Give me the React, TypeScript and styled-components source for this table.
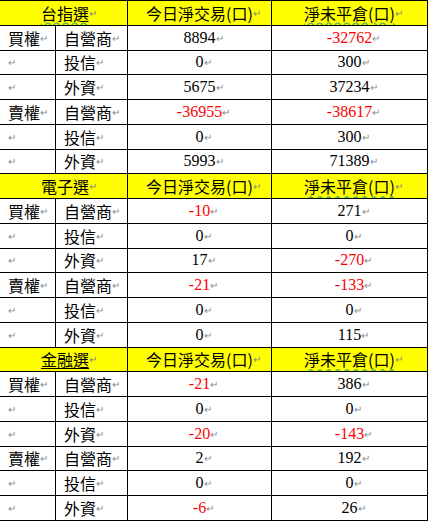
import { Fragment } from "react"
import styled, { createGlobalStyle } from "styled-components"

const Global = createGlobalStyle`
    html, body {
        margin: 0;
        padding: 0;
        background: #ffffff;
    }
`

// black background shows through the 1px gaps as the ruling
const Sheet = styled.div`
    width: 428px;
    box-sizing: border-box;
    padding: 1px 1px 1px 0;
    background: #000;
    display: grid;
    grid-template-columns: 55px 71px 143px 155px;
    grid-auto-rows: 23.76px;
    gap: 1px;
    font-family: "Noto Sans CJK TC", "Noto Sans CJK SC", sans-serif;
    font-size: 16px;
    color: #000;
`

const Cell = styled.div<{ $head?: boolean; $span?: number; $pad?: number }>`
    grid-column: span ${p => p.$span ?? 1};
    background: ${p => (p.$head ? "#ffff00" : "#ffffff")};
    display: flex;
    align-items: center;
    justify-content: ${p => (p.$pad !== undefined ? "flex-start" : "center")};
    padding-left: ${p => p.$pad ?? 0}px;
    white-space: nowrap;
    overflow: hidden;
    line-height: 20px;
`

const Num = styled.span<{ $neg?: boolean }>`
    font-family: "Liberation Serif", "Times New Roman", serif;
    font-size: 16px;
    color: ${p => (p.$neg ? "#ff0000" : "#000")};
`

// Word paragraph mark, no width so the text stays centred
const Mark = styled.span`
    display: inline-block;
    width: 0;
    overflow: visible;
    color: #8a8a8a;
    font-size: 10px;
    &::before {
        content: "↵";
    }
`

const Heading = styled.span<{ $deco?: "wavy" | "under" | "none" }>`
    text-decoration: ${p =>
        p.$deco === "wavy" ? "underline wavy #5cb85c" : p.$deco === "under" ? "underline #000" : "none"};
    text-underline-offset: 2px;
`

type Row = { side?: string; who: string; day: number; oi: number }

type Section = { title: string; deco: "wavy" | "under" | "none"; rows: Row[] }

const sections: Section[] = [
    {
        title: "台指選",
        deco: "wavy",
        rows: [
            { side: "買權", who: "自營商", day: 8894, oi: -32762 },
            { who: "投信", day: 0, oi: 300 },
            { who: "外資", day: 5675, oi: 37234 },
            { side: "賣權", who: "自營商", day: -36955, oi: -38617 },
            { who: "投信", day: 0, oi: 300 },
            { who: "外資", day: 5993, oi: 71389 },
        ],
    },
    {
        title: "電子選",
        deco: "none",
        rows: [
            { side: "買權", who: "自營商", day: -10, oi: 271 },
            { who: "投信", day: 0, oi: 0 },
            { who: "外資", day: 17, oi: -270 },
            { side: "賣權", who: "自營商", day: -21, oi: -133 },
            { who: "投信", day: 0, oi: 0 },
            { who: "外資", day: 0, oi: 115 },
        ],
    },
    {
        title: "金融選",
        deco: "under",
        rows: [
            { side: "買權", who: "自營商", day: -21, oi: 386 },
            { who: "投信", day: 0, oi: 0 },
            { who: "外資", day: -20, oi: -143 },
            { side: "賣權", who: "自營商", day: 2, oi: 192 },
            { who: "投信", day: 0, oi: 0 },
            { who: "外資", day: -6, oi: 26 },
        ],
    },
]

export default function App() {
    return (
        <>
            <Global />
            <Sheet>
                {sections.map(s => (
                    <Fragment key={s.title}>
                        <Cell $head $span={2} $pad={41}>
                            <Heading $deco={s.deco}>{s.title}</Heading>
                            <Mark />
                        </Cell>
                        <Cell $head>
                            <Heading>今日淨交易(口)</Heading>
                            <Mark />
                        </Cell>
                        <Cell $head>
                            <Heading $deco="wavy">淨未平倉(口)</Heading>
                            <Mark />
                        </Cell>
                        {s.rows.map((r, i) => (
                            <Fragment key={i}>
                                <Cell $pad={8}>
                                    {r.side}
                                    <Mark />
                                </Cell>
                                <Cell $pad={8}>
                                    {r.who}
                                    <Mark />
                                </Cell>
                                <Cell>
                                    <Num $neg={r.day < 0}>{r.day}</Num>
                                    <Mark />
                                </Cell>
                                <Cell>
                                    <Num $neg={r.oi < 0}>{r.oi}</Num>
                                    <Mark />
                                </Cell>
                            </Fragment>
                        ))}
                    </Fragment>
                ))}
            </Sheet>
        </>
    )
}
